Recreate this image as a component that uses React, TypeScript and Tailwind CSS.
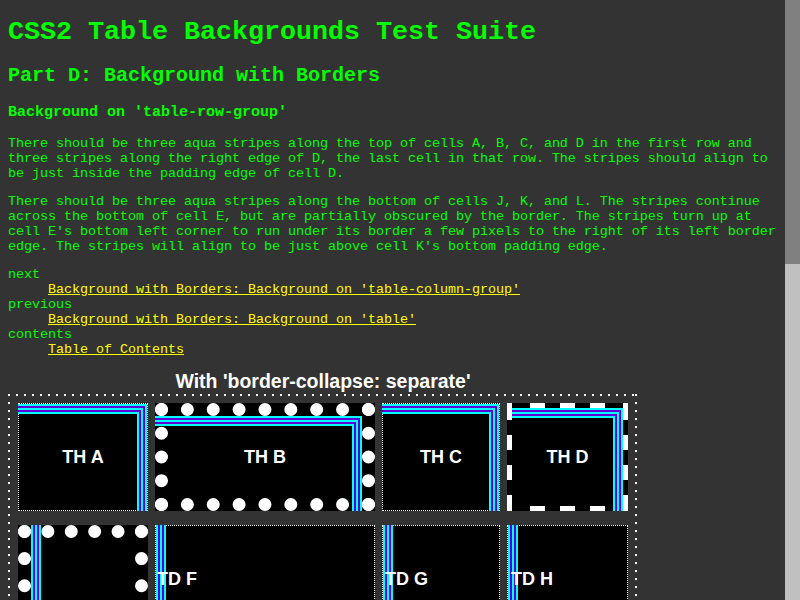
import React from "react";

function Corner({ off }: { off: string }) {
  return (
    <div className={`pointer-events-none absolute top-0 right-0 border-t-2 border-r-2 border-[#00ffff] ${off}`}>
      <div className="h-full border-t-2 border-r-2 border-[#6000d8]">
        <div className="h-full border-t-2 border-r-2 border-[#00ffff]">
          <div className="h-full border-t-2 border-r-2 border-[#6000d8]">
            <div className="h-full border-t-2 border-r-2 border-[#00ffff]" />
          </div>
        </div>
      </div>
    </div>
  );
}

function Band({ off }: { off: string }) {
  return (
    <div className={`pointer-events-none absolute left-0 flex w-[10px] ${off}`}>
      <div className="w-[2px] bg-[#00ffff]" />
      <div className="w-[2px] bg-[#6000d8]" />
      <div className="w-[2px] bg-[#00ffff]" />
      <div className="w-[2px] bg-[#6000d8]" />
      <div className="w-[2px] bg-[#00ffff]" />
    </div>
  );
}

export default function App() {
  return (
    <div className="flex h-[600px] w-[800px] overflow-hidden bg-[#333333]">
      <div className="h-[600px] w-[785px] overflow-hidden px-2 pt-[17px] font-['Liberation_Mono',monospace] text-[13.333px] text-[#00ff00]">
        <h1 className="text-[26.667px] font-bold leading-[30px]">CSS2 Table Backgrounds Test Suite</h1>
        <h2 className="mt-[17px] text-[20px] font-bold leading-[23px]">Part D: Background with Borders</h2>
        <h3 className="mt-[17px] text-[15px] font-bold leading-[17px]">Background on 'table-row-group'</h3>
        <p className="mt-[15px] whitespace-nowrap leading-[15px]">
          There should be three aqua stripes along the top of cells A, B, C, and D in the first row and
          <br />
          three stripes along the right edge of D, the last cell in that row. The stripes should align to
          <br />
          be just inside the padding edge of cell D.
        </p>
        <p className="mt-[13px] whitespace-nowrap leading-[15px]">
          There should be three aqua stripes along the bottom of cells J, K, and L. The stripes continue
          <br />
          across the bottom of cell E, but are partially obscured by the border. The stripes turn up at
          <br />
          cell E's bottom left corner to run under its border a few pixels to the right of its left border
          <br />
          edge. The stripes will align to be just above cell K's bottom padding edge.
        </p>
        <dl className="mt-[13px] leading-[15px]">
          <dt>next</dt>
          <dd className="pl-10">
            <a className="text-[#ffff00] underline">Background with Borders: Background on 'table-column-group'</a>
          </dd>
          <dt>previous</dt>
          <dd className="pl-10">
            <a className="text-[#ffff00] underline">Background with Borders: Background on 'table'</a>
          </dd>
          <dt>contents</dt>
          <dd className="pl-10">
            <a className="text-[#ffff00] underline">Table of Contents</a>
          </dd>
        </dl>
        <div className="mt-[14px] w-[630px] text-center font-['Liberation_Sans',Arial,sans-serif] text-[19.5px] font-bold leading-[21px] text-white">
          With 'border-collapse: separate'
        </div>
        <div className="relative mt-[1px] w-[630px] border-[3px] border-transparent px-[7px] pt-[7px] pb-[7px] font-['Liberation_Sans',Arial,sans-serif] text-[18px] font-bold text-white">
          <div className="pointer-events-none absolute -top-[2px] -left-[3px] -right-[3px] h-[2px] bg-[repeating-linear-gradient(to_right,#fff_0_2px,transparent_2px_8px)]" />
          <div className="pointer-events-none absolute -bottom-[2px] -left-[3px] -right-[3px] h-[2px] bg-[repeating-linear-gradient(to_right,#fff_0_2px,transparent_2px_8px)]" />
          <div className="pointer-events-none absolute -top-[2px] -bottom-[3px] -left-[3px] w-[2px] bg-[repeating-linear-gradient(to_bottom,#fff_0_2px,transparent_2px_8px)]" />
          <div className="pointer-events-none absolute -top-[2px] -bottom-[3px] -right-[2px] w-[2px] bg-[repeating-linear-gradient(to_bottom,#fff_0_2px,transparent_2px_8px)]" />
          <div className="flex h-[108px] gap-[7px]">
            <div className="relative flex w-[130px] items-center justify-center border border-dotted border-white bg-black">
              <span>TH A</span>
              <Corner off="-left-px -bottom-px" />
            </div>
            <div className="relative flex w-[220px] items-center justify-center border-[13px] border-dotted border-white bg-black">
              <span>TH B</span>
              <Corner off="-left-[13px] -bottom-[13px]" />
            </div>
            <div className="relative flex w-[118px] items-center justify-center border border-dotted border-white bg-black">
              <span>TH C</span>
              <Corner off="-left-px -bottom-px" />
            </div>
            <div className="relative flex w-[121px] items-center justify-center border-[5px] border-transparent bg-black">
              <span>TH D</span>
              <Corner off="-left-[5px] -bottom-[5px]" />
              <div className="pointer-events-none absolute -top-[5px] -left-[5px] -right-[5px] h-[5px] bg-[linear-gradient(to_right,#fff_0_5px,transparent_5px_23px,#fff_23px_38px,transparent_38px_53px,#fff_53px_68px,transparent_68px_83px,#fff_83px_98px,transparent_98px_116px,#fff_116px)]" />
              <div className="pointer-events-none absolute -bottom-[5px] -left-[5px] -right-[5px] h-[5px] bg-[linear-gradient(to_right,#fff_0_5px,transparent_5px_23px,#fff_23px_38px,transparent_38px_53px,#fff_53px_68px,transparent_68px_83px,#fff_83px_98px,transparent_98px_116px,#fff_116px)]" />
              <div className="pointer-events-none absolute -top-[5px] -bottom-[5px] -left-[5px] w-[5px] bg-[linear-gradient(to_bottom,#fff_0_17px,transparent_17px_32px,#fff_32px_47px,transparent_47px_62px,#fff_62px_77px,transparent_77px_92px,#fff_92px_103px,transparent_103px_103px,#fff_103px)]" />
              <div className="pointer-events-none absolute -top-[5px] -bottom-[5px] -right-[5px] w-[5px] bg-[linear-gradient(to_bottom,#fff_0_17px,transparent_17px_32px,#fff_32px_47px,transparent_47px_62px,#fff_62px_77px,transparent_77px_92px,#fff_92px_103px,transparent_103px_103px,#fff_103px)]" />
            </div>
          </div>
          <div className="mt-[14px] flex items-start gap-[7px]">
            <div className="relative flex h-[230px] w-[130px] items-center border-[13px] border-dotted border-white bg-black pl-[1px]">
              <Band off="-top-[13px] -bottom-[13px]" />
            </div>
            <div className="relative flex h-[108px] w-[220px] items-center border border-dotted border-white bg-black pl-[1px]">
              <span className="relative z-10">TD F</span>
              <Band off="-top-px -bottom-px" />
            </div>
            <div className="relative flex h-[108px] w-[118px] items-center border border-dotted border-white bg-black pl-[2px]">
              <span className="relative z-10">TD G</span>
              <Band off="-top-px -bottom-px" />
            </div>
            <div className="relative flex h-[108px] w-[121px] items-center border border-dotted border-white bg-black pl-[3px]">
              <span className="relative z-10">TD H</span>
              <Band off="-top-px -bottom-px" />
            </div>
          </div>
        </div>
      </div>
      <div className="flex h-[600px] w-[15px] flex-col bg-[#c0c0c0]">
        <div className="h-[264px] bg-[#808080]" />
      </div>
    </div>
  );
}
